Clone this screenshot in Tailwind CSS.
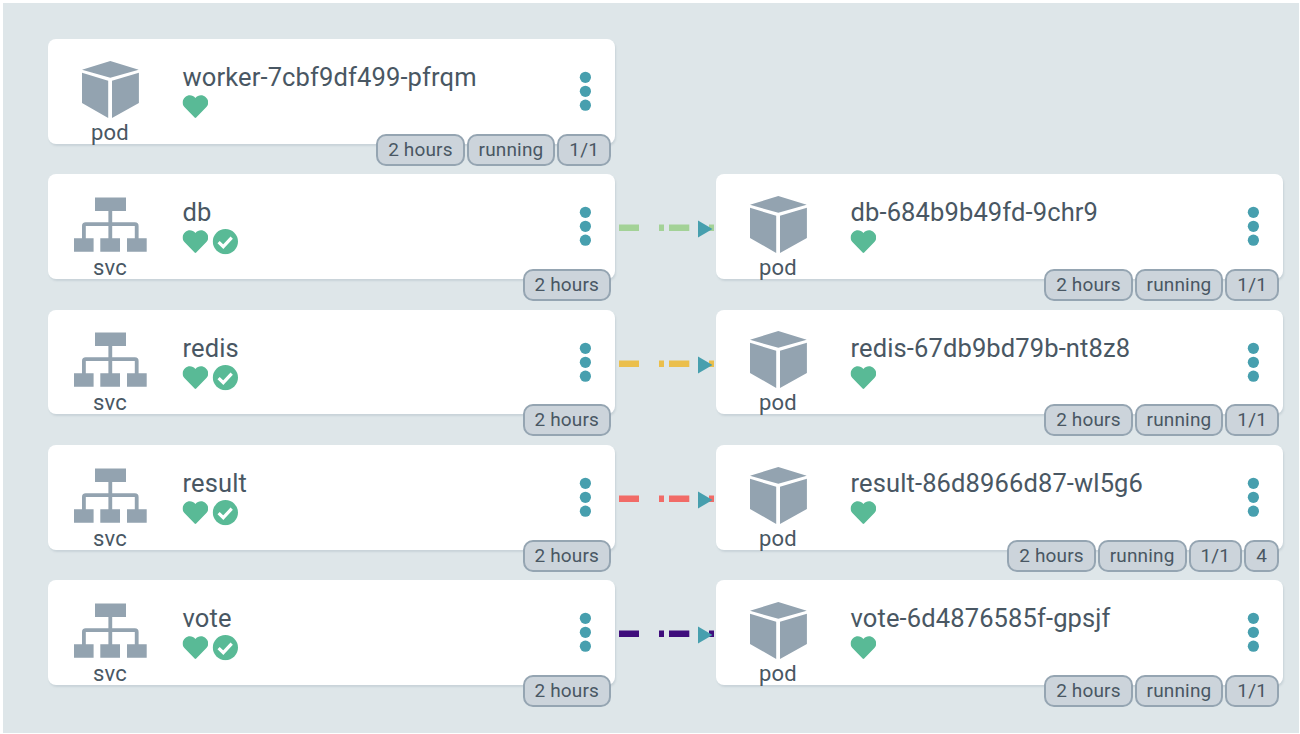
<!DOCTYPE html>
<html lang="en">
<head>
<meta charset="utf-8">
<title>Application resource tree</title>
<script src="https://cdn.jsdelivr.net/npm/@tailwindcss/browser@4"></script>
</head>
<body class="h-[734px] w-[1300px] overflow-hidden bg-white pt-[3px] pl-[3px] font-['Roboto',sans-serif] text-[#495763]">
<svg class="hidden">
  <symbol id="pod" viewBox="0 0 74 58">
    <path d="M37.3 0 65.7 8.8 37.3 16.8 9 8.8ZM9 11.8 35.2 19.8V57L9 42ZM65.9 11.8 39 19.8V57L65.9 42Z"/>
  </symbol>
  <symbol id="svc" viewBox="0 0 74 58">
    <path d="M22 1.4H53V15H22ZM1 42.2H20.6V55.7H1ZM27.3 42.2H47V55.7H27.3ZM54 42.2H73.7V55.7H54Z"/>
    <path d="M37.3 14V43M10.9 43V30Q10.9 28.2 12.7 28.2H61.9Q63.7 28.2 63.7 30V43" fill="none" stroke="currentColor" stroke-width="3.8"/>
  </symbol>
  <symbol id="heart" viewBox="0 0 26 26">
    <path d="M13 4.4C10.4 1.1 5.8.9 2.9 3.3-.6 6.3-.5 10.8 2 13.5L12.2 23.9Q13 24.7 13.8 23.9L24 13.5C26.5 10.8 26.6 6.3 23.1 3.3 20.2.9 15.6 1.1 13 4.4Z"/>
  </symbol>
  <symbol id="check" viewBox="0 0 26 26">
    <circle cx="13" cy="13" r="12.6"/>
    <path d="M6.2 13.6 10.9 18.1 19.3 9.1" fill="none" stroke="#fff" stroke-width="3.2"/>
  </symbol>
  <symbol id="dots" viewBox="0 0 12 40">
    <circle cx="6.4" cy="6.3" r="5.6"/><circle cx="6.4" cy="20.3" r="5.6"/><circle cx="6.4" cy="34.2" r="5.6"/>
  </symbol>
</svg>
<main id="tree" class="flex h-[730px] w-[1296px] flex-col gap-[30.85px] bg-[#dee6e9] pt-[36px] pl-[45px]"></main>
<script>
const badge = t => `<span class="flex h-[32px] items-center rounded-[10px] border-2 border-[#95a5b2] bg-[#ccd4db] px-[10px] pb-px text-[19px] leading-none tracking-[0.15px]">${t}</span>`;
const node = (kind, name, badges) => `
  <article class="relative flex h-[104.5px] w-[567px] shrink-0 rounded-[8px] bg-white shadow-[1px_2px_2px_rgba(120,140,155,0.2)]">
    <div class="ml-[25px] flex w-[74px] flex-col items-center pt-[21.5px]">
      <svg class="h-[58px] w-[74px] shrink-0 fill-current text-[#93a3b0]"><use href="#${kind}"/></svg>
      <span class="mt-[1.1px] text-[22px] leading-[26px] tracking-[0.2px]">${kind}</span>
    </div>
    <div class="ml-[35.5px] flex-1 pt-[23px]">
      <h2 class="text-[25.5px] leading-[31px] tracking-[0.13px] whitespace-nowrap">${name}</h2>
      <div class="mt-[0.9px] -ml-[0.6px] flex gap-[4px] fill-[#59ba96]">
        <svg class="h-[26px] w-[26px]" viewBox="-0.4 0.4 26 26"><use href="#heart" width="26" height="26"/></svg>
        ${kind === 'svc' ? '<svg class="h-[26px] w-[26px]" viewBox="-0.4 0.4 26 26"><use href="#check" width="26" height="26"/></svg>' : ''}
      </div>
    </div>
    <svg class="mt-[32px] mr-[24px] h-[40px] w-[12px] fill-[#479fae]"><use href="#dots"/></svg>
    <div class="absolute top-[94.5px] right-[4px] flex gap-[2px]">${badges.map(badge).join('')}</div>
  </article>`;
const edge = c => `<svg class="h-[104.5px] w-[101px] shrink-0" viewBox="0 0 101 104.5">
    <path d="M4 53.7h20M44 53.7h5M54 53.7h20.3M94 53.7h5" stroke="${c}" stroke-width="6.4"/>
    <path d="M83 46.5 97.5 55 83 63.6Z" fill="#479fae"/></svg>`;
const rows = [
  ['db', 'db-684b9b49fd-9chr9', '#a3d297', []],
  ['redis', 'redis-67db9bd79b-nt8z8', '#ebbf4c', []],
  ['result', 'result-86d8966d87-wl5g6', '#f16b67', ['4']],
  ['vote', 'vote-6d4876585f-gpsjf', '#3f0d7c', []],
];
const row = s => `<section class="flex">${s}</section>`;
const podBadges = ['2 hours', 'running', '1/1'];
document.getElementById('tree').innerHTML = row(node('pod', 'worker-7cbf9df499-pfrqm', podBadges)) +
  rows.map(([a, b, c, extra]) => row(node('svc', a, ['2 hours']) + edge(c) + node('pod', b, [...podBadges, ...extra]))).join('');
</script>
</body>
</html>
